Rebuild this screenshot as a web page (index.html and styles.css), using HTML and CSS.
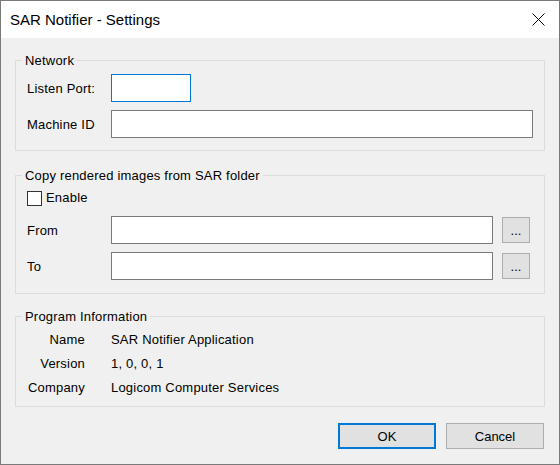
FILE: index.html
```html
<!DOCTYPE html>
<html>
<head>
<meta charset="utf-8">
<title>SAR Notifier - Settings</title>
<link rel="stylesheet" href="styles.css">
</head>
<body>
<div class="window">
  <div class="titlebar">
    <span class="title">SAR Notifier - Settings</span>
    <svg class="close" width="13" height="13" viewBox="0 0 13 13"><path d="M0.5 0.5 L12.5 12.5 M12.5 0.5 L0.5 12.5" stroke="#000" stroke-width="1" fill="none"/></svg>
  </div>
  <div class="content">
    <fieldset class="group g1">
      <legend>Network</legend>
      <div class="grid two">
        <label class="lbl">Listen Port:</label>
        <div><input class="field port focus" type="text"></div>
        <label class="lbl">Machine ID</label>
        <input class="field" type="text">
      </div>
    </fieldset>
    <fieldset class="group g2">
      <legend>Copy rendered images from SAR folder</legend>
      <div class="g2body">
        <label class="check"><span class="box"></span>Enable</label>
        <div class="grid three">
          <label class="lbl">From</label>
          <input class="field" type="text">
          <button class="browse">...</button>
          <label class="lbl">To</label>
          <input class="field" type="text">
          <button class="browse">...</button>
        </div>
      </div>
    </fieldset>
    <fieldset class="group g3">
      <legend>Program Information</legend>
      <div class="info">
        <span class="key">Name</span><span class="val">SAR Notifier Application</span>
        <span class="key">Version</span><span class="val">1, 0, 0, 1</span>
        <span class="key">Company</span><span class="val">Logicom Computer Services</span>
      </div>
    </fieldset>
    <div class="actions">
      <button class="btn default">OK</button>
      <button class="btn">Cancel</button>
    </div>
  </div>
</div>
</body>
</html>
```
FILE: styles.css
```css
* { box-sizing: border-box; }
html, body { margin: 0; padding: 0; }
body {
  width: 560px;
  height: 465px;
  font-family: "Liberation Sans", Arial, sans-serif;
  font-size: 13px;
  letter-spacing: 0.2px;
  color: #000;
}
.window {
  width: 560px;
  height: 465px;
  border: 1px solid #7a7a7a;
  display: flex;
  flex-direction: column;
  background: #f0f0f0;
}
.titlebar {
  height: 37px;
  flex: none;
  background: #fff;
  display: flex;
  align-items: center;
  justify-content: space-between;
  padding: 0 14px 0 9px;
}
.title {
  font-size: 15px;
  letter-spacing: 0;
  line-height: 18px;
  padding-top: 1px;
}
.close { display: block; }
.content {
  flex: 1;
  display: flex;
  flex-direction: column;
  padding: 15px 14px 0 14px;
}
.group {
  margin: 0;
  padding: 0;
  border: 1px solid #dcdcdc;
  min-width: 0;
}
.group legend {
  margin-left: 6px;
  padding: 0 3px;
  line-height: 15px;
  height: 15px;
}
.g2 { margin-top: 17px; }
.g3 { margin-top: 15px; }
.grid {
  display: grid;
  align-items: center;
}
.two {
  grid-template-columns: 84px 1fr;
  row-gap: 8px;
  padding: 6px 11px 12px 11px;
}
.three {
  grid-template-columns: 75px 1fr 28px;
  column-gap: 9px;
  row-gap: 8px;
  margin-top: 10px;
}
.lbl { line-height: 15px; }
.field {
  display: block;
  height: 28px;
  width: 100%;
  margin: 0;
  border: 1px solid #7a7a7a;
  background: #fff;
  outline: none;
  padding: 0 3px;
  font: inherit;
}
.port { width: 80px; }
.focus { border-color: #0078d7; }
.g2body {
  padding: 7px 14px 13px 11px;
}
.check {
  display: flex;
  align-items: center;
  height: 16px;
  line-height: 16px;
}
.box {
  width: 15px;
  height: 15px;
  border: 1px solid #333;
  background: #fff;
  margin-right: 4px;
}
.browse {
  height: 26px;
  width: 28px;
  margin: 0;
  padding: 0 0 3px 0;
  border: 1px solid #adadad;
  background: #e1e1e1;
  font: inherit;
  letter-spacing: 0;
  line-height: 26px;
  color: #000;
}
.info {
  display: grid;
  grid-template-columns: 58px 1fr;
  grid-auto-rows: 24px;
  column-gap: 26px;
  align-items: center;
  padding: 3px 11px 7px 11px;
}
.key { text-align: right; }
.actions {
  display: flex;
  justify-content: flex-end;
  gap: 10px;
  margin-top: 16px;
  padding-right: 1px;
}
.btn {
  width: 98px;
  height: 26px;
  margin: 0;
  padding: 0;
  border: 1px solid #adadad;
  background: #e1e1e1;
  font: inherit;
  color: #000;
}
.btn.default { border: 2px solid #0078d7; }
```
